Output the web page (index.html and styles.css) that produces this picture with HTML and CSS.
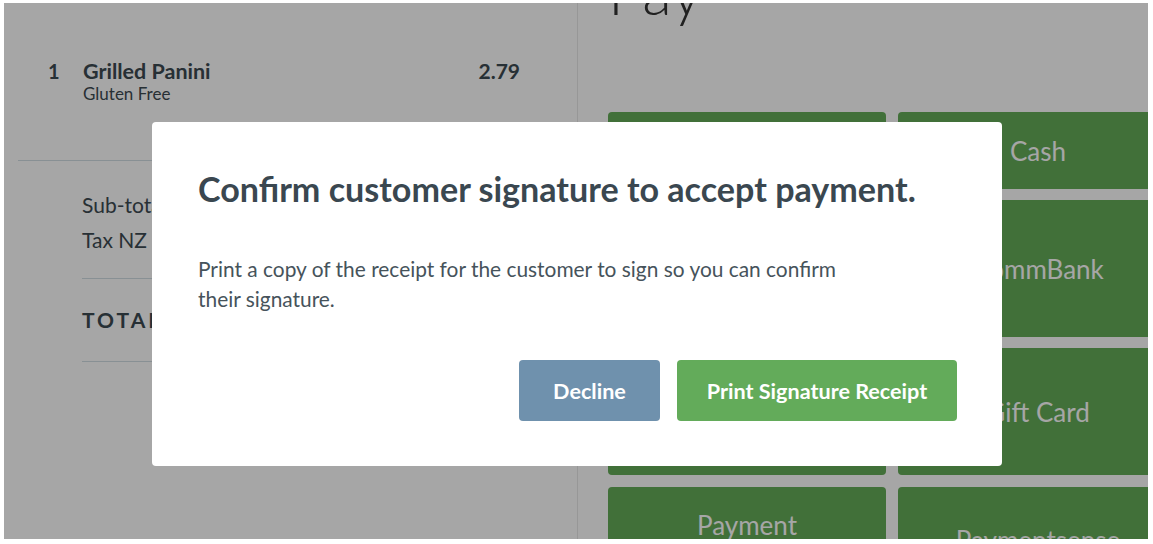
FILE: index.html
```html
<!DOCTYPE html>
<html>
<head>
<meta charset="utf-8">
<link rel="stylesheet" href="styles.css">
</head>
<body>
<div class="app">
  <section class="order">
    <div class="item">
      <span class="qty">1</span>
      <div class="desc">
        <div class="name">Grilled Panini</div>
        <div class="mod">Gluten Free</div>
      </div>
      <span class="price">2.79</span>
    </div>
    <div class="totals">
      <div class="trow"><span>Sub-total</span><span>2.43</span></div>
      <div class="trow"><span>Tax NZ GST</span><span>0.36</span></div>
      <div class="grand"><span>TOTAL</span><span>2.79</span></div>
    </div>
  </section>
  <section class="pay">
    <h1 class="pay-title">Pay</h1>
    <div class="tiles">
      <div class="tile">EFTPOS</div>
      <div class="tile">Cash</div>
      <div class="tile">Credit Card</div>
      <div class="tile">CommBank</div>
      <div class="tile">Voucher</div>
      <div class="tile">Gift Card</div>
      <div class="tile">Payment<br>Express</div>
      <div class="tile">Paymentsense</div>
    </div>
  </section>
  <div class="overlay"></div>
  <div class="modal">
    <h2 class="modal-title">Confirm customer signature to accept payment.</h2>
    <p class="modal-text">Print a copy of the receipt for the customer to sign so you can confirm their signature.</p>
    <div class="actions">
      <button class="btn btn-decline">Decline</button>
      <button class="btn btn-print">Print Signature Receipt</button>
    </div>
  </div>
</div>
</body>
</html>
```
FILE: styles.css
```css
* { box-sizing: border-box; }
html, body { margin: 0; padding: 0; background: #fff; }
body { padding: 3px 5px 5px 4px; font-family: Lato, "Open Sans", sans-serif; color: #3d4a52; }
.app {
  position: relative;
  height: 536px;
  overflow: hidden;
  display: flex;
  background: #fff;
}
.order {
  width: 574px;
  flex: none;
  border-right: 1px solid #e8e8e8;
  padding: 0 17px 0 14px;
}
.item {
  display: flex;
  align-items: flex-start;
  padding: 55px 40px 0 30px;
  height: 158px;
  border-bottom: 1px solid #d2dde3;
}
.qty { width: 35px; font-size: 20px; font-weight: 700; line-height: 26px; }
.desc { flex: 1; }
.name { font-size: 21.5px; font-weight: 700; line-height: 26px; }
.mod { font-size: 17px; line-height: 20px; }
.price { font-size: 21px; font-weight: 700; line-height: 26px; }
.totals { padding: 0 64px; }
.trow {
  display: flex;
  justify-content: space-between;
  font-size: 21px;
  line-height: 35px;
}
.trow:first-child { margin-top: 26px; }
.trow:nth-child(2) { padding-bottom: 21px; border-bottom: 1px solid #d2dde3; }
.grand {
  display: flex;
  justify-content: space-between;
  font-size: 21px;
  font-weight: 700;
  letter-spacing: 3px;
  line-height: 82px;
  border-bottom: 1px solid #d2dde3;
}
.pay {
  flex: none;
  width: 640px;
  padding-left: 30px;
}
.pay-title {
  margin: -41px 0 0 0;
  font-size: 61px;
  line-height: 60px;
  font-weight: 300;
  color: #333;
}
.tiles {
  margin-top: 90px;
  display: grid;
  grid-template-columns: 278px 280px;
  grid-template-rows: 77px 137px 127px 107px;
  gap: 11px 12px;
}
.tiles .tile:nth-child(n+7) { margin-top: 1px; }
.tile {
  background: #64ac58;
  border-radius: 4px;
  color: #fff;
  font-size: 26px;
  line-height: 30px;
  display: flex;
  align-items: center;
  justify-content: center;
  text-align: center;
}
.overlay {
  position: absolute;
  inset: 0;
  background: rgba(0, 0, 0, 0.35);
}
.modal {
  position: absolute;
  left: 148px;
  top: 119px;
  width: 850px;
  height: 344px;
  background: #fff;
  border-radius: 4px;
  padding: 47px 45px 45px 46px;
}
.modal-title {
  margin: 0;
  font-size: 34.1px;
  line-height: 40px;
  font-weight: 700;
  color: #3a4750;
}
.modal-text {
  margin: 45px 0 0 0;
  max-width: 670px;
  font-size: 20.9px;
  line-height: 30px;
  color: #46535b;
}
.actions {
  margin-top: 46px;
  display: flex;
  justify-content: flex-end;
  gap: 17px;
}
.btn {
  height: 61px;
  border: none;
  border-radius: 4px;
  color: #fff;
  font-family: Lato, "Open Sans", sans-serif;
  font-size: 21.6px;
  font-weight: 700;
  padding: 0 20px;
}
.btn-decline { background: #6f91ad; width: 141px; }
.btn-print { background: #63ab5a; width: 280px; }
```
